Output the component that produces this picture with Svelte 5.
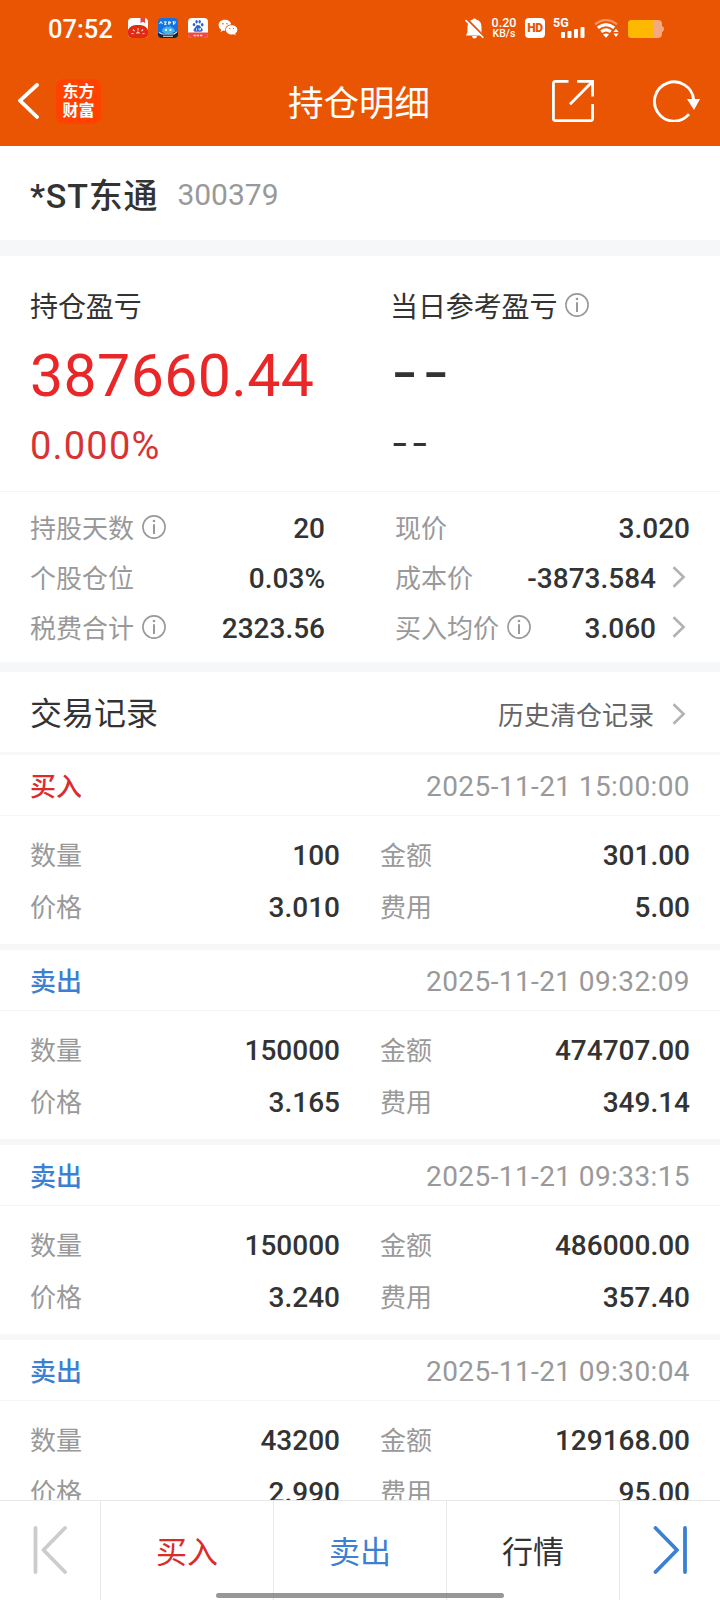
<script>
  const summary = [
    [
      { label: "持股天数", value: "20", info: true },
      { label: "个股仓位", value: "0.03%" },
      { label: "税费合计", value: "2323.56", info: true },
    ],
    [
      { label: "现价", value: "3.020" },
      { label: "成本价", value: "-3873.584", link: true },
      { label: "买入均价", value: "3.060", info: true, link: true },
    ],
  ];

  const records = [
    { side: "buy", time: "2025-11-21 15:00:00", count: "100", amount: "301.00", price: "3.010", fee: "5.00" },
    { side: "sell", time: "2025-11-21 09:32:09", count: "150000", amount: "474707.00", price: "3.165", fee: "349.14" },
    { side: "sell", time: "2025-11-21 09:33:15", count: "150000", amount: "486000.00", price: "3.240", fee: "357.40" },
    { side: "sell", time: "2025-11-21 09:30:04", count: "43200", amount: "129168.00", price: "2.990", fee: "95.00" },
  ];
</script>

{#snippet infoIcon()}
  <svg class="info" width="24" height="24" viewBox="0 0 24 24" fill="none" stroke="#999" stroke-width="1.6">
    <circle cx="12" cy="12" r="11.1" />
    <path d="M12 9.3V19" stroke-width="2" />
    <circle cx="12" cy="6" r="1.3" fill="#999" stroke="none" />
  </svg>
{/snippet}

{#snippet arrow()}
  <svg class="arrow" width="14" height="22" viewBox="0 0 14 22" fill="none" stroke="#b2b2b2" stroke-width="2.6">
    <path d="M1.5 1.2L11.6 11L1.5 20.8" />
  </svg>
{/snippet}

<div class="page">
  <header>
    <div class="status">
      <span class="clock">07:52</span>
      <div class="apps">
        <svg width="20" height="20" viewBox="0 0 20 20">
          <rect width="20" height="20" rx="4" fill="#fff" />
          <path d="M12.5 0H17V5L14.8 3.8L12.5 5Z" fill="#e9443a" />
          <path d="M0 12C2 8 5 7 10 7S18 8 20 12V16Q20 20 16 20H4Q0 20 0 16Z" fill="#df2a14" />
          <path d="M3.5 15.5l2 .3M5 11.5l1.5 1.5M10 10v2.5M15 11.5L13.5 13M16.5 15.5l-2 .3M8.5 15.5L10 14l1.5 1.5" stroke="#ffe3c4" stroke-width="1.1" fill="none" />
        </svg>
        <svg width="20" height="20" viewBox="0 0 20 20">
          <rect width="20" height="20" rx="4" fill="#1573e0" />
          <path d="M0 15L20 14V16Q20 20 16 20H4Q0 20 0 16Z" fill="#10243f" />
          <path d="M4 14Q4 9.5 7 9.5L9 8L10 9.5L12 8L13.5 9.5Q17 10 17 14Q10 17 4 14Z" fill="#45b3ee" />
          <path d="M1.5 6L3 3.5L4.5 6M5.8 4h3M7.3 3.5V6.5M6 6.3h2.6M10 4.2h3M11 3.2L10.5 6.5M12.5 4L11.5 6.5M14.5 4h3.5M15.5 3.2V6.5M17.5 5L15.5 6.5" stroke="#fff" stroke-width=".9" fill="none" />
          <path d="M1 14.5L4 16H16L19 14M5 18.2h10" stroke="#d9edff" stroke-width="1.1" fill="none" />
          <circle cx="8" cy="12" r="1.1" fill="#fff" />
          <circle cx="12.5" cy="12" r="1.1" fill="#fff" />
        </svg>
        <svg width="20" height="20" viewBox="0 0 20 20">
          <rect width="20" height="20" rx="4" fill="#fff" />
          <path d="M0 14.5H20V16Q20 20 16 20H4Q0 20 0 16Z" fill="#ee4a42" />
          <g fill="#2c63cf">
            <ellipse cx="6" cy="6.6" rx="1.3" ry="1.7" />
            <ellipse cx="8.6" cy="3.8" rx="1.2" ry="1.7" />
            <ellipse cx="11.7" cy="3.8" rx="1.2" ry="1.7" />
            <ellipse cx="14.2" cy="6.8" rx="1.3" ry="1.7" />
            <path d="M10 7Q12 7 13 9.4Q15.5 11 14.5 13Q13 14.3 10 13.5Q7 14.3 5.7 13Q4.8 11 7.2 9.4Q8 7 10 7Z" />
          </g>
          <path d="M8.5 10.5v2M11 10v2h1.5v-2" stroke="#fff" stroke-width=".8" fill="none" />
          <path d="M5.5 17.5h2.4M8.7 17.5h2.4M12 17.5h2.4" stroke="#ffd5d0" stroke-width="1.6" />
        </svg>
        <svg width="20" height="20" viewBox="0 0 20 20">
          <path d="M7 1.8C3 1.8 .6 4.3 .6 7.2Q.6 10 3.2 11.7L2.6 14L5.2 12.6L7.3 12.8Q6.5 7.5 13.2 6.3Q12 1.8 7 1.8Z" fill="#fff" />
          <path d="M13.6 7.3C10.3 7.3 8 9.3 8 11.9S10.5 16.5 13.8 16.5L15.7 16.2L17.7 17.3L17.2 15.4Q19.4 14 19.4 11.7C19.4 9.2 16.8 7.3 13.6 7.3Z" fill="#fff" />
          <g fill="#ea5504">
            <circle cx="4.9" cy="5.7" r=".8" />
            <circle cx="9" cy="5.7" r=".8" />
            <circle cx="11.8" cy="10.6" r=".7" />
            <circle cx="15.5" cy="10.6" r=".7" />
          </g>
        </svg>
      </div>
      <div class="system">
        <svg class="bell" width="19" height="21" viewBox="0 0 19 21">
          <path d="M9.5 .5Q10.8 .5 11.2 1.6Q16.5 3 16.5 9V14L18 17.5H1L2.5 14V9Q2.5 3 7.8 1.6Q8.2 .5 9.5 .5ZM7 18H12Q11.7 20.6 9.5 20.6T7 18Z" fill="#fff" />
          <path d="M1.6 .8L19 18.4" stroke="#ea5504" stroke-width="2" />
          <path d="M.5 2L18.3 19.8" stroke="#fff" stroke-width="1.6" />
        </svg>
        <div class="speed"><span>0.20</span><span>KB/s</span></div>
        <span class="hd">HD</span>
        <div class="mobile">
          <span>5G</span>
          <svg width="24" height="12" viewBox="0 0 24 12" fill="#fff">
            <rect y="6" width="4" height="6" rx="1" />
            <rect x="6.5" y="5" width="4" height="7" rx="1" />
            <rect x="13" y="3" width="4" height="9" rx="1" />
            <rect x="19.5" y="1" width="4" height="11" rx="1" />
          </svg>
        </div>
        <svg class="wifi" width="25" height="19" viewBox="0 0 25 19" fill="none" stroke="#fff" stroke-width="3">
          <path d="M1 5.3Q12 -3 23 5.3" stroke="#f5935f" stroke-width="2.2" />
          <path d="M3.8 8.8Q12 2.4 20.2 8.8" />
          <path d="M7.2 12.8Q12 9 16.8 12.8" />
          <path d="M9 15.4Q12 13.4 15 15.4L12 18.7Z" fill="#fff" stroke="none" />
          <path d="M22 9.7L24.6 13H19.4ZM22 18L24.6 14.6H19.4Z" fill="#fff" stroke="none" />
        </svg>
        <svg class="battery" width="36" height="18" viewBox="0 0 36 18">
          <path d="M4 0H30Q34 0 34 4V6Q36 6.5 36 9T34 12V14Q34 18 30 18H4Q0 18 0 14V4Q0 0 4 0Z" fill="#f4aa80" />
          <path d="M4 0H26V18H4Q0 18 0 14V4Q0 0 4 0Z" fill="#ffb800" />
        </svg>
      </div>
    </div>
    <div class="nav">
      <svg class="back" width="22" height="36" viewBox="0 0 22 36" fill="none" stroke="#fff" stroke-width="3.8" stroke-linecap="round" stroke-linejoin="round">
        <path d="M20 2L3 17.6L20 34" />
      </svg>
      <div class="logo"><span>东方</span><span>财富</span></div>
      <h1>持仓明细</h1>
      <svg class="share" width="42" height="42" viewBox="0 0 42 42" fill="none" stroke="#fff" stroke-width="2.8">
        <path d="M16.5 1.4H3.4Q1.4 1.4 1.4 3.4V38.6Q1.4 40.6 3.4 40.6H38.6Q40.6 40.6 40.6 38.6V24" />
        <path d="M25 1.4H40.6V16.5M40 2L18 24.2" />
      </svg>
      <svg class="refresh" width="48" height="42" viewBox="0 0 48 42">
        <path d="M36 34.2A19.6 19.6 0 1 1 40.6 19.5" fill="none" stroke="#fff" stroke-width="2.8" />
        <path d="M34 19H47L41 30Z" fill="#fff" />
      </svg>
    </div>
  </header>

  <section class="stock">
    <h2>*ST东通</h2>
    <span class="code">300379</span>
  </section>

  <section class="profit">
    <div class="col">
      <div class="caption">持仓盈亏</div>
      <div class="total">387660.44</div>
      <div class="percent">0.000%</div>
    </div>
    <div class="col">
      <div class="caption">当日参考盈亏 {@render infoIcon()}</div>
      <div class="total empty">--</div>
      <div class="percent empty">--</div>
    </div>
  </section>

  <section class="summary">
    {#each summary as column}
      <div class="col">
        {#each column as item}
          <div class="row">
            <span class="label">{item.label}</span>
            {#if item.info}{@render infoIcon()}{/if}
            <span class="value">{item.value}</span>
            {#if item.link}{@render arrow()}{/if}
          </div>
        {/each}
      </div>
    {/each}
  </section>

  <section class="history">
    <h3>交易记录</h3>
    <span>历史清仓记录</span>
    {@render arrow()}
  </section>

  <main>
    {#each records as record}
      <article>
        <div class="head">
          <span class={record.side}>{record.side === "buy" ? "买入" : "卖出"}</span>
          <time>{record.time}</time>
        </div>
        <div class="grid">
          <div class="row"><span class="label">数量</span><span class="value">{record.count}</span></div>
          <div class="row"><span class="label">金额</span><span class="value">{record.amount}</span></div>
          <div class="row"><span class="label">价格</span><span class="value">{record.price}</span></div>
          <div class="row"><span class="label">费用</span><span class="value">{record.fee}</span></div>
        </div>
      </article>
    {/each}
  </main>

  <footer>
    <div class="tab">
      <svg width="34" height="48" viewBox="0 0 34 48" fill="none" stroke="#ccc" stroke-width="3.8" stroke-linecap="round" stroke-linejoin="round">
        <path d="M2.5 2V46M32 2L10.5 24L32 46" />
      </svg>
    </div>
    <div class="tab buy">买入</div>
    <div class="tab sell">卖出</div>
    <div class="tab">行情</div>
    <div class="tab">
      <svg width="34" height="48" viewBox="0 0 34 48" fill="none" stroke="#3b80d2" stroke-width="3.8" stroke-linecap="round" stroke-linejoin="round">
        <path d="M32 2V46M2.5 2L24 24L2.5 46" />
      </svg>
    </div>
    <div class="home"></div>
  </footer>
</div>

<style>
  :global(body) {
    background: #fff;
  }
  .page {
    width: 720px;
    height: 1600px;
    overflow: hidden;
    display: flex;
    flex-direction: column;
    background: #fff;
    color: #333;
    font-family: Roboto, "Noto Sans CJK SC", sans-serif;
  }
  h1,
  h2,
  h3 {
    margin: 0;
    font-weight: 400;
  }
  svg {
    display: block;
    flex: none;
  }
  header,
  section {
    flex: none;
    box-sizing: border-box;
  }
  header {
    height: 146px;
    background: #ea5504;
    color: #fff;
  }
  .status {
    height: 56px;
    padding: 0 56px 0 48px;
    display: flex;
    align-items: center;
  }
  .clock {
    width: 80px;
    font-size: 25.5px;
    font-weight: 500;
    line-height: 30px;
    padding-top: 2px;
  }
  .apps {
    display: flex;
    gap: 10px;
  }
  .system {
    display: flex;
    align-items: center;
    margin-left: auto;
  }
  .speed {
    display: flex;
    flex-direction: column;
    align-items: center;
    width: 26px;
    margin-left: 7px;
    font-size: 12.5px;
    font-weight: 500;
    line-height: 11px;
  }
  .speed span:first-child {
    line-height: 12px;
  }
  .speed span:last-child {
    font-size: 10.5px;
    line-height: 10px;
  }
  .hd {
    width: 20px;
    height: 20px;
    margin-left: 8px;
    border-radius: 4px;
    background: #fff;
    color: #ea5504;
    font-size: 12px;
    font-weight: 900;
    line-height: 20px;
    letter-spacing: -0.3px;
    text-align: center;
  }
  .mobile {
    width: 32px;
    height: 20px;
    margin-left: 8px;
  }
  .mobile span {
    display: block;
    height: 8px;
    font-size: 12.5px;
    font-weight: 700;
    line-height: 10px;
  }
  .mobile svg {
    margin-left: 8px;
  }
  .wifi {
    margin-left: 9px;
  }
  .battery {
    margin: 2px 0 0 9px;
  }
  .nav {
    height: 90px;
    padding: 0 19px 0 17px;
    display: flex;
    align-items: center;
  }
  .logo {
    display: flex;
    flex-direction: column;
    justify-content: center;
    align-items: center;
    width: 45px;
    height: 45px;
    margin-left: 17px;
    border-radius: 8px;
    background: #ff4200;
    font-size: 16px;
    font-weight: 700;
    line-height: 19px;
  }
  h1 {
    margin: 5px 0 0 187px;
    font-size: 35.5px;
    line-height: 50px;
  }
  .share {
    margin-left: auto;
  }
  .refresh {
    margin-left: 59px;
  }
  .stock {
    height: 110px;
    padding: 0 30px;
    display: flex;
    align-items: center;
    border-bottom: 16px solid #f6f7f9;
  }
  h2 {
    font-size: 34px;
    font-weight: 500;
    letter-spacing: 0.8px;
  }
  .code {
    margin: 2px 0 0 19px;
    color: #999;
    font-size: 30px;
  }
  .profit {
    height: 236px;
    padding: 30px 30px 0;
    display: grid;
    grid-template-columns: 360px 1fr;
    border-bottom: 1px solid #f3f4f5;
  }
  .caption {
    display: flex;
    align-items: center;
    height: 38px;
    font-size: 28px;
    letter-spacing: -0.1px;
  }
  .caption .info {
    margin: -1px 0 0 8px;
  }
  .total {
    height: 72px;
    margin-top: 16px;
    color: #e92728;
    font-size: 59px;
    line-height: 72px;
    letter-spacing: 0.4px;
  }
  .percent {
    height: 50px;
    margin-top: 9px;
    color: #d93232;
    font-size: 38px;
    line-height: 50px;
    letter-spacing: 1.2px;
  }
  .empty {
    color: #333;
    font-family: Inter, sans-serif;
  }
  .total.empty {
    padding-left: 1px;
    line-height: 64px;
    letter-spacing: 4px;
  }
  .percent.empty {
    padding-left: 1px;
    line-height: 43px;
    letter-spacing: 2.4px;
  }
  .summary {
    height: 180px;
    padding: 12px 30px 0;
    display: grid;
    grid-template-columns: 295px 295px;
    column-gap: 70px;
    border-bottom: 10px solid #f6f7f9;
  }
  .row {
    display: flex;
    align-items: center;
    height: 50px;
  }
  .label {
    color: #999;
    font-size: 26px;
    line-height: 38px;
  }
  .value {
    margin: -1px 0 0 auto;
    font-size: 28px;
    font-weight: 500;
  }
  .row .info {
    margin: -4px 0 0 8px;
  }
  .row .arrow {
    margin: -4px 4px 0 16px;
  }
  .history {
    height: 83px;
    padding: 0 34px 0 30px;
    display: flex;
    align-items: center;
    border-bottom: 3px solid #f6f7f9;
  }
  h3 {
    margin-top: -2px;
    font-size: 32px;
  }
  .history span {
    margin-left: auto;
    padding-top: 2px;
    color: #666;
    font-size: 26px;
  }
  .history .arrow {
    margin: 3px 0 0 18px;
  }
  main {
    flex: 1;
    min-height: 0;
    overflow: hidden;
  }
  article {
    height: 189px;
    border-bottom: 6px solid #f6f7f9;
  }
  .head {
    height: 60px;
    padding: 0 30px;
    display: flex;
    align-items: center;
    justify-content: space-between;
    border-bottom: 1px solid #f3f4f5;
    font-size: 26px;
    font-weight: 500;
  }
  .head span {
    margin-top: -2px;
  }
  time {
    padding-top: 3px;
    color: #999;
    font-size: 28px;
    font-weight: 400;
    letter-spacing: 0.4px;
  }
  .grid {
    display: grid;
    grid-template-columns: 310px 310px;
    column-gap: 40px;
    padding: 14px 30px 0;
  }
  .grid .row {
    height: 52px;
  }
  .buy {
    color: #dd2a2a;
  }
  .sell {
    color: #3b80d2;
  }
  footer {
    position: relative;
    flex: none;
    height: 99px;
    display: grid;
    grid-template-columns: 101px 173px 173px 173px 100px;
    border-top: 1px solid #e8e8e8;
    background: #fff;
  }
  .tab {
    display: flex;
    align-items: center;
    justify-content: center;
    border-right: 1px solid #e8e8e8;
    font-size: 31px;
    padding-bottom: 2px;
  }
  .tab:nth-child(5) {
    border-right: none;
  }
  .home {
    position: absolute;
    left: 216px;
    bottom: 2px;
    width: 288px;
    height: 5px;
    border-radius: 3px;
    background: rgba(125, 125, 125, 0.8);
  }
</style>
